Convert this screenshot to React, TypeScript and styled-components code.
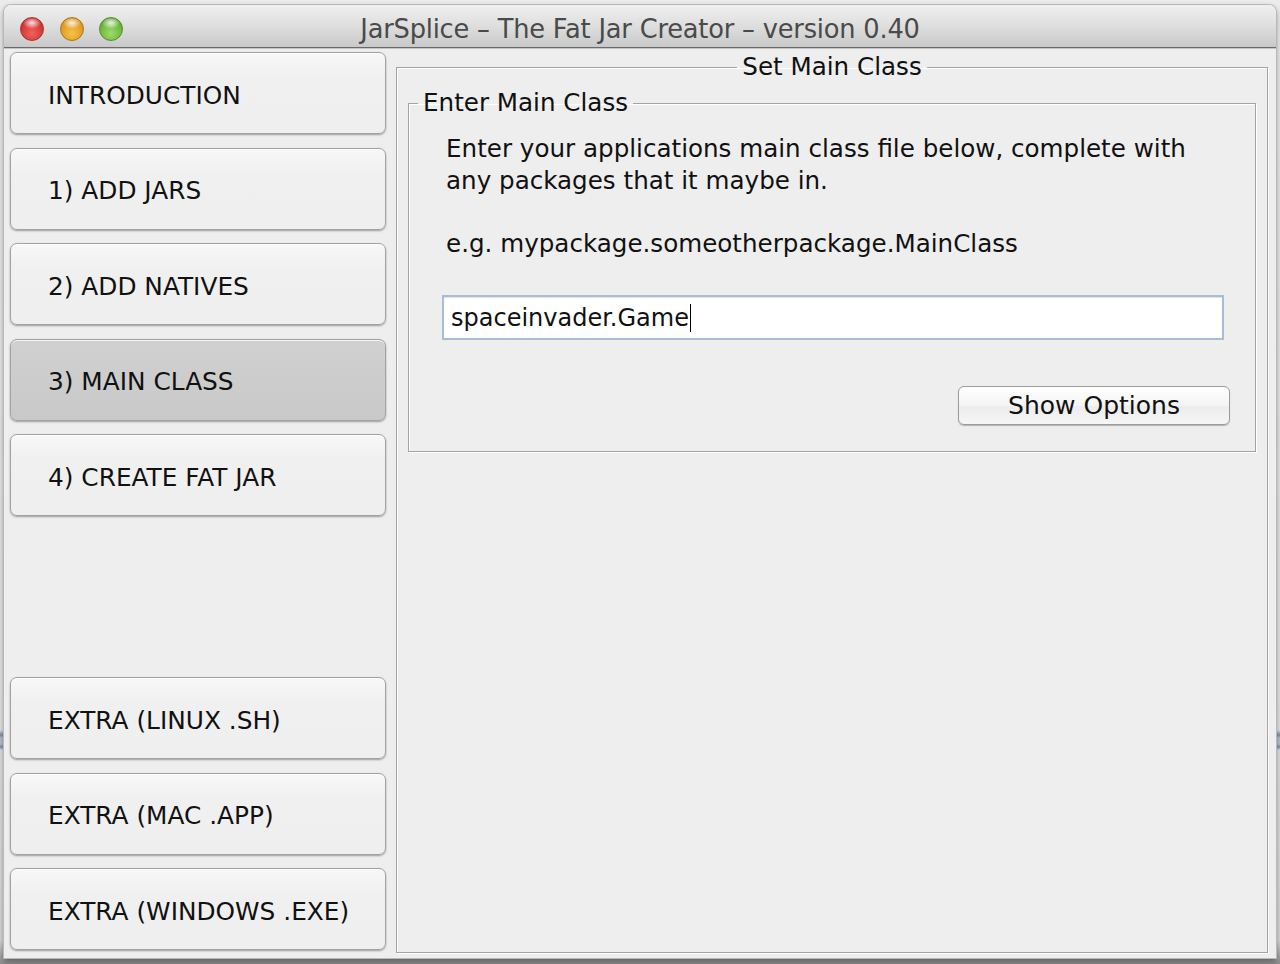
import React from "react";
import styled, { createGlobalStyle } from "styled-components";

const Global = createGlobalStyle`
  html, body { margin: 0; padding: 0; }
  body {
    background: #e9e9e9;
    font-family: "DejaVu Sans", "Liberation Sans", sans-serif;
    color: #111;
  }
`;

const Screen = styled.div`
  width: 1280px;
  height: 964px;
  box-sizing: border-box;
  padding: 5px 4px 6px 4px;
  overflow: hidden;
  background: linear-gradient(
    to bottom,
    #ececec 0px,
    #e4e4e4 730px,
    #7f90a6 735px,
    #b4c0cd 738px,
    #b4c0cd 744px,
    #7f90a6 747px,
    #e0e0e0 750px,
    #d8d8d8 940px,
    #8c8c8c 964px
  );
`;

const Window = styled.div`
  height: 100%;
  display: flex;
  flex-direction: column;
  background: #eeeeee;
  border-radius: 7px 7px 0 0;
  box-shadow: 0 0 0 1px #b9b9b9, 0 3px 6px rgba(0, 0, 0, 0.45);
  overflow: hidden;
`;

const TitleBar = styled.div`
  height: 43px;
  flex: none;
  box-sizing: border-box;
  padding-top: 5px;
  display: grid;
  grid-template-columns: 1fr auto 1fr;
  align-items: center;
  background: linear-gradient(to bottom, #f0f0f0 0%, #dedede 50%, #c9c9c9 100%);
  border-bottom: 1px solid #6a6a6a;
  box-shadow: 0 1px 0 #c4c4c4;
`;

const Lights = styled.div`
  display: flex;
  gap: 15.5px;
  padding-left: 16px;
`;

const Light = styled.span<{ $c1: string; $c2: string; $edge: string }>`
  width: 24px;
  height: 24px;
  border-radius: 50%;
  box-sizing: border-box;
  border: 1px solid ${(p) => p.$edge};
  background:
    radial-gradient(ellipse 60% 40% at 50% 22%, rgba(255, 255, 255, 0.85), rgba(255, 255, 255, 0) 70%),
    radial-gradient(circle at 50% 70%, ${(p) => p.$c1} 0%, ${(p) => p.$c2} 80%);
`;

const Title = styled.div`
  font-size: 25.7px;
  color: #4a4a4a;
  white-space: nowrap;
  letter-spacing: -0.2px;
`;

const Body = styled.div`
  flex: 1;
  display: flex;
  gap: 10px;
  padding: 0 8px 0 6px;
  min-height: 0;
`;

const Side = styled.div`
  width: 376px;
  flex: none;
  display: flex;
  flex-direction: column;
  justify-content: space-between;
  padding: 4px 0 8px 0;
`;

const Group = styled.div`
  display: flex;
  flex-direction: column;
  gap: 13.5px;
`;

const NavButton = styled.div<{ $active?: boolean }>`
  height: 82px;
  box-sizing: border-box;
  display: flex;
  align-items: center;
  padding: 4px 0 0 37px;
  font-size: 24.8px;
  color: #111;
  border: 1px solid #a2a2a2;
  border-radius: 7px;
  background: ${(p) =>
    p.$active
      ? "linear-gradient(to bottom, #d0d0d0, #c9c9c9)"
      : "linear-gradient(to bottom, #f8f8f8, #f0f0f0 30%, #efefef)"};
  box-shadow: 0 1px 2px rgba(0, 0, 0, 0.35), inset 0 1px 0 rgba(255, 255, 255, 0.8);
`;

const Panel = styled.fieldset`
  flex: 1;
  margin: 4px 0 5px 0;
  padding: 6px 11px 0 11px;
  border: 1px solid #a3a3a3;
  box-shadow: inset 1px 1px 0 #ffffff, 1px 1px 0 #ffffff;
  min-width: 0;
`;

const PanelLegend = styled.legend`
  margin: 0 auto;
  padding: 0 5px;
  font-size: 24.6px;
  line-height: 30px;
`;

const Group2 = styled.fieldset`
  margin: 0;
  padding: 15px 25px 26px 9px;
  border: 1px solid #a3a3a3;
  box-shadow: inset 1px 1px 0 #ffffff, 1px 1px 0 #ffffff;
  display: flex;
  flex-direction: column;
`;

const GroupLegend = styled.legend`
  margin-left: 0;
  padding: 0 5px;
  font-size: 24.6px;
  line-height: 30px;
`;

const Para = styled.p`
  margin: 0 0 0 28px;
  font-size: 24.6px;
  line-height: 32px;
  & + & {
    margin-top: 31px;
  }
`;

const Field = styled.div`
  margin: 35px 6px 0 24px;
  height: 45px;
  box-sizing: border-box;
  display: flex;
  align-items: center;
  padding-left: 7px;
  background: #ffffff;
  border: 2px solid #a9bed6;
  box-shadow: inset 0 1px 1px rgba(0, 0, 0, 0.12);
  font-size: 24px;
`;

const Caret = styled.span`
  display: inline-block;
  width: 1px;
  height: 28px;
  background: #000;
  margin-left: 1px;
`;

const ActionRow = styled.div`
  margin-top: 46px;
  display: flex;
  justify-content: flex-end;
`;

const PushButton = styled.div`
  width: 272px;
  height: 39px;
  box-sizing: border-box;
  display: flex;
  align-items: center;
  justify-content: center;
  font-size: 25px;
  border: 1px solid #9c9c9c;
  border-radius: 6px;
  background: linear-gradient(to bottom, #ffffff, #f4f4f4 50%, #ececec 51%, #f6f6f6);
  box-shadow: 0 1px 1px rgba(0, 0, 0, 0.25);
`;

const topItems = ["INTRODUCTION", "1) ADD JARS", "2) ADD NATIVES", "3) MAIN CLASS", "4) CREATE FAT JAR"];
const bottomItems = ["EXTRA (LINUX .SH)", "EXTRA (MAC .APP)", "EXTRA (WINDOWS .EXE)"];

export default function App() {
  return (
    <>
      <Global />
      <Screen>
        <Window>
          <TitleBar>
            <Lights>
              <Light $c1="#f0625c" $c2="#c9282a" $edge="#a5302d" />
              <Light $c1="#f7c24a" $c2="#d98d15" $edge="#a8771d" />
              <Light $c1="#9fdc6a" $c2="#5ba82d" $edge="#5a8a34" />
            </Lights>
            <Title>JarSplice – The Fat Jar Creator – version 0.40</Title>
            <div />
          </TitleBar>
          <Body>
            <Side>
              <Group>
                {topItems.map((t) => (
                  <NavButton key={t} $active={t === "3) MAIN CLASS"}>
                    {t}
                  </NavButton>
                ))}
              </Group>
              <Group>
                {bottomItems.map((t) => (
                  <NavButton key={t}>{t}</NavButton>
                ))}
              </Group>
            </Side>
            <Panel>
              <PanelLegend>Set Main Class</PanelLegend>
              <Group2>
                <GroupLegend>Enter Main Class</GroupLegend>
                <Para>
                  Enter your applications main class file below, complete with
                  <br />
                  any packages that it maybe in.
                </Para>
                <Para>e.g. mypackage.someotherpackage.MainClass</Para>
                <Field>
                  spaceinvader.Game
                  <Caret />
                </Field>
                <ActionRow>
                  <PushButton>Show Options</PushButton>
                </ActionRow>
              </Group2>
            </Panel>
          </Body>
        </Window>
      </Screen>
    </>
  );
}
